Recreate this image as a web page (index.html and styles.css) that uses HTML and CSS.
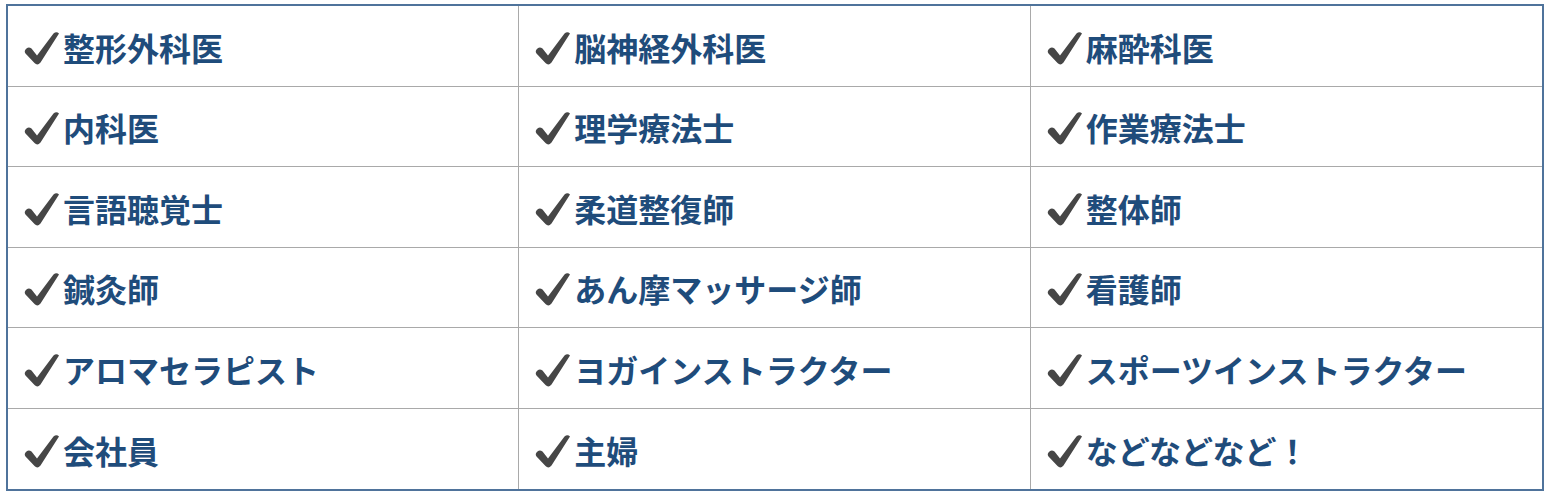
FILE: index.html
```html
<!DOCTYPE html>
<html lang="ja">
<head>
<meta charset="utf-8">
<link rel="stylesheet" href="styles.css">
</head>
<body>
<div class="wrap">
  <div class="table">
    <div class="cell"><svg class="chk" viewBox="0 0 36 34"><path d="M1.5 18.5 Q4 15 7.5 17.5 L13 24.5 L29.5 2.5 Q32.5 0 35 2.5 L16.5 31.5 Q13.5 35 10.5 32 L1.5 22.5 Q0 20.5 1.5 18.5Z"/></svg><span>整形外科医</span></div>
    <div class="cell"><svg class="chk" viewBox="0 0 36 34"><path d="M1.5 18.5 Q4 15 7.5 17.5 L13 24.5 L29.5 2.5 Q32.5 0 35 2.5 L16.5 31.5 Q13.5 35 10.5 32 L1.5 22.5 Q0 20.5 1.5 18.5Z"/></svg><span>脳神経外科医</span></div>
    <div class="cell"><svg class="chk" viewBox="0 0 36 34"><path d="M1.5 18.5 Q4 15 7.5 17.5 L13 24.5 L29.5 2.5 Q32.5 0 35 2.5 L16.5 31.5 Q13.5 35 10.5 32 L1.5 22.5 Q0 20.5 1.5 18.5Z"/></svg><span>麻酔科医</span></div>
    <div class="cell"><svg class="chk" viewBox="0 0 36 34"><path d="M1.5 18.5 Q4 15 7.5 17.5 L13 24.5 L29.5 2.5 Q32.5 0 35 2.5 L16.5 31.5 Q13.5 35 10.5 32 L1.5 22.5 Q0 20.5 1.5 18.5Z"/></svg><span>内科医</span></div>
    <div class="cell"><svg class="chk" viewBox="0 0 36 34"><path d="M1.5 18.5 Q4 15 7.5 17.5 L13 24.5 L29.5 2.5 Q32.5 0 35 2.5 L16.5 31.5 Q13.5 35 10.5 32 L1.5 22.5 Q0 20.5 1.5 18.5Z"/></svg><span>理学療法士</span></div>
    <div class="cell"><svg class="chk" viewBox="0 0 36 34"><path d="M1.5 18.5 Q4 15 7.5 17.5 L13 24.5 L29.5 2.5 Q32.5 0 35 2.5 L16.5 31.5 Q13.5 35 10.5 32 L1.5 22.5 Q0 20.5 1.5 18.5Z"/></svg><span>作業療法士</span></div>
    <div class="cell"><svg class="chk" viewBox="0 0 36 34"><path d="M1.5 18.5 Q4 15 7.5 17.5 L13 24.5 L29.5 2.5 Q32.5 0 35 2.5 L16.5 31.5 Q13.5 35 10.5 32 L1.5 22.5 Q0 20.5 1.5 18.5Z"/></svg><span>言語聴覚士</span></div>
    <div class="cell"><svg class="chk" viewBox="0 0 36 34"><path d="M1.5 18.5 Q4 15 7.5 17.5 L13 24.5 L29.5 2.5 Q32.5 0 35 2.5 L16.5 31.5 Q13.5 35 10.5 32 L1.5 22.5 Q0 20.5 1.5 18.5Z"/></svg><span>柔道整復師</span></div>
    <div class="cell"><svg class="chk" viewBox="0 0 36 34"><path d="M1.5 18.5 Q4 15 7.5 17.5 L13 24.5 L29.5 2.5 Q32.5 0 35 2.5 L16.5 31.5 Q13.5 35 10.5 32 L1.5 22.5 Q0 20.5 1.5 18.5Z"/></svg><span>整体師</span></div>
    <div class="cell"><svg class="chk" viewBox="0 0 36 34"><path d="M1.5 18.5 Q4 15 7.5 17.5 L13 24.5 L29.5 2.5 Q32.5 0 35 2.5 L16.5 31.5 Q13.5 35 10.5 32 L1.5 22.5 Q0 20.5 1.5 18.5Z"/></svg><span>鍼灸師</span></div>
    <div class="cell"><svg class="chk" viewBox="0 0 36 34"><path d="M1.5 18.5 Q4 15 7.5 17.5 L13 24.5 L29.5 2.5 Q32.5 0 35 2.5 L16.5 31.5 Q13.5 35 10.5 32 L1.5 22.5 Q0 20.5 1.5 18.5Z"/></svg><span>あん摩マッサージ師</span></div>
    <div class="cell"><svg class="chk" viewBox="0 0 36 34"><path d="M1.5 18.5 Q4 15 7.5 17.5 L13 24.5 L29.5 2.5 Q32.5 0 35 2.5 L16.5 31.5 Q13.5 35 10.5 32 L1.5 22.5 Q0 20.5 1.5 18.5Z"/></svg><span>看護師</span></div>
    <div class="cell"><svg class="chk" viewBox="0 0 36 34"><path d="M1.5 18.5 Q4 15 7.5 17.5 L13 24.5 L29.5 2.5 Q32.5 0 35 2.5 L16.5 31.5 Q13.5 35 10.5 32 L1.5 22.5 Q0 20.5 1.5 18.5Z"/></svg><span>アロマセラピスト</span></div>
    <div class="cell"><svg class="chk" viewBox="0 0 36 34"><path d="M1.5 18.5 Q4 15 7.5 17.5 L13 24.5 L29.5 2.5 Q32.5 0 35 2.5 L16.5 31.5 Q13.5 35 10.5 32 L1.5 22.5 Q0 20.5 1.5 18.5Z"/></svg><span>ヨガインストラクター</span></div>
    <div class="cell"><svg class="chk" viewBox="0 0 36 34"><path d="M1.5 18.5 Q4 15 7.5 17.5 L13 24.5 L29.5 2.5 Q32.5 0 35 2.5 L16.5 31.5 Q13.5 35 10.5 32 L1.5 22.5 Q0 20.5 1.5 18.5Z"/></svg><span>スポーツインストラクター</span></div>
    <div class="cell"><svg class="chk" viewBox="0 0 36 34"><path d="M1.5 18.5 Q4 15 7.5 17.5 L13 24.5 L29.5 2.5 Q32.5 0 35 2.5 L16.5 31.5 Q13.5 35 10.5 32 L1.5 22.5 Q0 20.5 1.5 18.5Z"/></svg><span>会社員</span></div>
    <div class="cell"><svg class="chk" viewBox="0 0 36 34"><path d="M1.5 18.5 Q4 15 7.5 17.5 L13 24.5 L29.5 2.5 Q32.5 0 35 2.5 L16.5 31.5 Q13.5 35 10.5 32 L1.5 22.5 Q0 20.5 1.5 18.5Z"/></svg><span>主婦</span></div>
    <div class="cell"><svg class="chk" viewBox="0 0 36 34"><path d="M1.5 18.5 Q4 15 7.5 17.5 L13 24.5 L29.5 2.5 Q32.5 0 35 2.5 L16.5 31.5 Q13.5 35 10.5 32 L1.5 22.5 Q0 20.5 1.5 18.5Z"/></svg><span>などなどなど！</span></div>
  </div>
</div>
</body>
</html>
```

FILE: styles.css
```css
html, body {
  margin: 0;
  padding: 0;
  background: #ffffff;
}
.wrap {
  padding: 4px 0 0 6px;
}
.table {
  box-sizing: border-box;
  width: 1538px;
  height: 487px;
  border: 2px solid #4f739b;
  display: grid;
  grid-template-columns: repeat(3, 1fr);
  grid-template-rows: repeat(6, 1fr);
}
.cell {
  display: flex;
  align-items: center;
  padding-left: 16px;
  padding-top: 2px;
  border-right: 1px solid #a9a9a9;
  border-bottom: 1px solid #a9a9a9;
  font-family: "Noto Sans CJK JP", "Noto Sans", sans-serif;
  font-weight: 700;
  font-size: 32px;
  color: #1f4c7b;
  white-space: nowrap;
}
.cell:nth-child(3n) {
  border-right: none;
}
.cell:nth-last-child(-n+3) {
  border-bottom: none;
}
.chk {
  width: 36px;
  height: 34px;
  margin-right: 3px;
  margin-top: 2px;
  fill: #464646;
  flex: none;
}
```
